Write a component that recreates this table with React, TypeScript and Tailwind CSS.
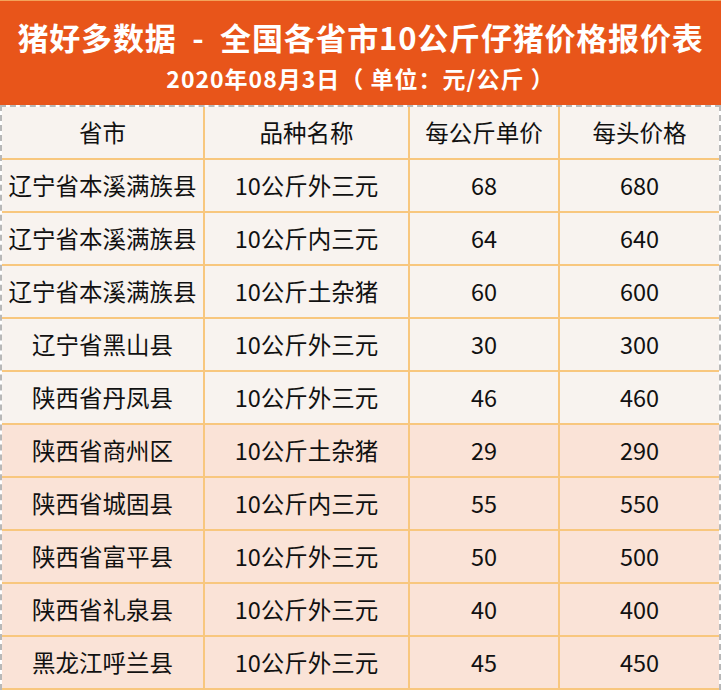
const rows = [
  ["辽宁省本溪满族县", "10公斤外三元", "68", "680"],
  ["辽宁省本溪满族县", "10公斤内三元", "64", "640"],
  ["辽宁省本溪满族县", "10公斤土杂猪", "60", "600"],
  ["辽宁省黑山县", "10公斤外三元", "30", "300"],
  ["陕西省丹凤县", "10公斤外三元", "46", "460"],
  ["陕西省商州区", "10公斤土杂猪", "29", "290"],
  ["陕西省城固县", "10公斤内三元", "55", "550"],
  ["陕西省富平县", "10公斤外三元", "50", "500"],
  ["陕西省礼泉县", "10公斤外三元", "40", "400"],
  ["黑龙江呼兰县", "10公斤外三元", "45", "450"],
];

const font = { fontFamily: '"Noto Sans CJK SC", "Noto Sans", sans-serif' };

function Row({ cells, pink }: { cells: string[]; pink?: boolean }) {
  return (
    <div
      className={`grid grid-cols-[203px_205px_150px_1fr] h-[53px] border-b-2 border-[#f8c77e] text-[23.5px] text-[#111] ${
        pink ? "bg-[#fae3d7]" : "bg-[#f8f3ef]"
      }`}
    >
      {cells.map((c, i) => (
        <div
          key={i}
          className={`flex items-center justify-center whitespace-nowrap ${i < 3 ? "border-r-2 border-[#f8c77e]" : ""}`}
        >
          {c}
        </div>
      ))}
    </div>
  );
}

export default function App() {
  return (
    <div className="w-[721px] h-[691px] bg-white" style={font}>
      <div className="h-[105px] bg-[#e8551a] border-t border-[#f3a35a] flex flex-col items-center text-white font-bold">
        <div className="text-[31px] leading-none mt-[20px] tracking-[0.8px] whitespace-pre">猪好多数据  -  全国各省市10公斤仔猪价格报价表</div>
        <div className="text-[23px] leading-none mt-[15px] tracking-[1px] whitespace-pre">2020年08月3日（ 单位：元/公斤 ）</div>
      </div>
      <div className="border-t-2 border-l-2 border-r-2 border-dashed border-[#b8b8b8] w-[721px]">
        <Row cells={["省市", "品种名称", "每公斤单价", "每头价格"]} />
        {rows.map((r, i) => (
          <Row key={i} cells={r} pink={i >= 5} />
        ))}
      </div>
    </div>
  );
}
